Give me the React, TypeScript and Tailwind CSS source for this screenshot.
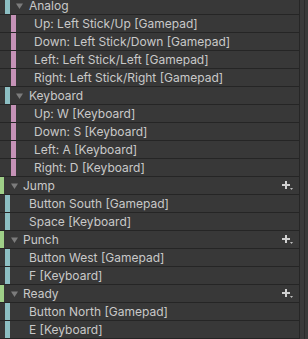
import React from 'react';

type Row = { level: 0 | 1 | 2; label: string; composite?: boolean };

const rows: Row[] = [
  { level: 1, label: 'Analog', composite: true },
  { level: 2, label: 'Up: Left Stick/Up [Gamepad]' },
  { level: 2, label: 'Down: Left Stick/Down [Gamepad]' },
  { level: 2, label: 'Left: Left Stick/Left [Gamepad]' },
  { level: 2, label: 'Right: Left Stick/Right [Gamepad]' },
  { level: 1, label: 'Keyboard', composite: true },
  { level: 2, label: 'Up: W [Keyboard]' },
  { level: 2, label: 'Down: S [Keyboard]' },
  { level: 2, label: 'Left: A [Keyboard]' },
  { level: 2, label: 'Right: D [Keyboard]' },
  { level: 0, label: 'Jump' },
  { level: 1, label: 'Button South [Gamepad]' },
  { level: 1, label: 'Space [Keyboard]' },
  { level: 0, label: 'Punch' },
  { level: 1, label: 'Button West [Gamepad]' },
  { level: 1, label: 'F [Keyboard]' },
  { level: 0, label: 'Ready' },
  { level: 1, label: 'Button North [Gamepad]' },
  { level: 1, label: 'E [Keyboard]' },
];

function Triangle() {
  return (
    <svg width="7" height="6" viewBox="0 0 7 6" className="shrink-0">
      <path d="M0 0.5 H7 L3.5 6 Z" fill="#7c7c7c" />
    </svg>
  );
}

function PlusMore() {
  return (
    <svg width="11" height="10" viewBox="0 0 11 10" className="shrink-0">
      <path d="M3 0 H5 V3 H8 V5 H5 V8 H3 V5 H0 V3 H3 Z" fill="#d0d0d0" />
      <path d="M8 7 H11 L9.5 9 Z" fill="#bcbcbc" />
    </svg>
  );
}

function TreeRow({ row }: { row: Row }) {
  return (
    <div className="flex h-[18px] items-stretch border-b border-[#252525] bg-[#383838]">
      {row.level === 0 && (
        <>
          <div className="w-[4px] bg-[#9fcf88]" />
          <div className="flex items-center pl-[7px] pr-[5px]">
            <Triangle />
          </div>
          <span className="flex-1 flex items-center leading-none">{row.label}</span>
          <div className="flex items-center pr-[6px]">
            <PlusMore />
          </div>
        </>
      )}
      {row.level === 1 && (
        <>
          <div className="w-[5px]" />
          <div className="w-[5px] bg-[#8dbfc3]" />
          {row.composite ? (
            <div className="flex items-center pl-[6px] pr-[6px]">
              <Triangle />
            </div>
          ) : (
            <div className="w-[19px]" />
          )}
          <span className="flex-1 flex items-center leading-none">{row.label}</span>
        </>
      )}
      {row.level === 2 && (
        <>
          <div className="w-[11px]" />
          <div className="w-[5px] bg-[#c592b7]" />
          <div className="w-[18px]" />
          <span className="flex-1 flex items-center leading-none">{row.label}</span>
        </>
      )}
    </div>
  );
}

export default function App() {
  return (
    <div
      className="flex h-[339px] w-[308px] overflow-hidden bg-[#383838] text-[12px] text-[#c9c9c9]"
      style={{ fontFamily: 'Inter, "Noto Sans", sans-serif' }}
    >
      <div className="flex-1 -mt-[3px]">
        {rows.map((r, i) => (
          <TreeRow key={i} row={r} />
        ))}
      </div>
      {/* scrollbar gutter */}
      <div className="flex w-[9px] border-l border-[#262626] bg-[#3a3a3a]">
        <div className="w-[4px]" />
        <div className="w-[1px] bg-[#2b2b2b]" />
      </div>
    </div>
  );
}
